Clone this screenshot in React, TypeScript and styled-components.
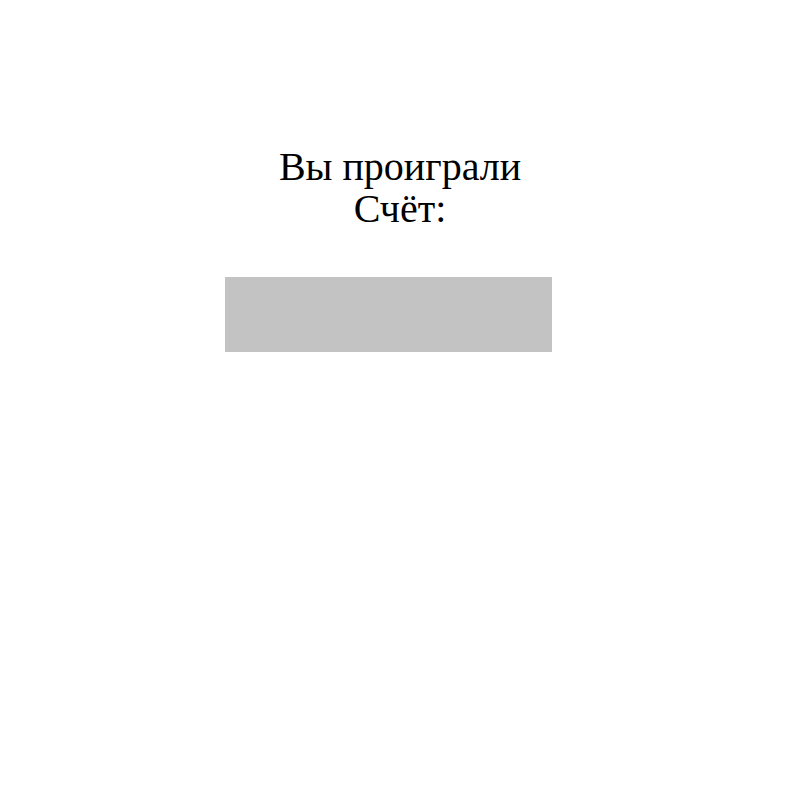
import React from "react";
import styled, { createGlobalStyle } from "styled-components";

const Global = createGlobalStyle`
  html, body { margin: 0; padding: 0; background: #ffffff; }
  body { font-family: "Liberation Serif", "Times New Roman", serif; }
`;

const Page = styled.div`
  width: 800px;
  height: 800px;
  display: flex;
  flex-direction: column;
  padding-top: 146px;
  box-sizing: border-box;
`;

const Message = styled.div`
  text-align: center;
  font-size: 40px;
  line-height: 42px;
  color: #000000;
`;

const Line = styled.div``;

const Panel = styled.div`
  margin-top: 47px;
  margin-left: 225px;
  width: 327px;
  height: 75px;
  background: #c3c3c3;
`;

export default function App() {
  return (
    <>
      <Global />
      <Page>
        <Message>
          <Line>Вы проиграли</Line>
          <Line>Счёт:</Line>
        </Message>
        <Panel />
      </Page>
    </>
  );
}
